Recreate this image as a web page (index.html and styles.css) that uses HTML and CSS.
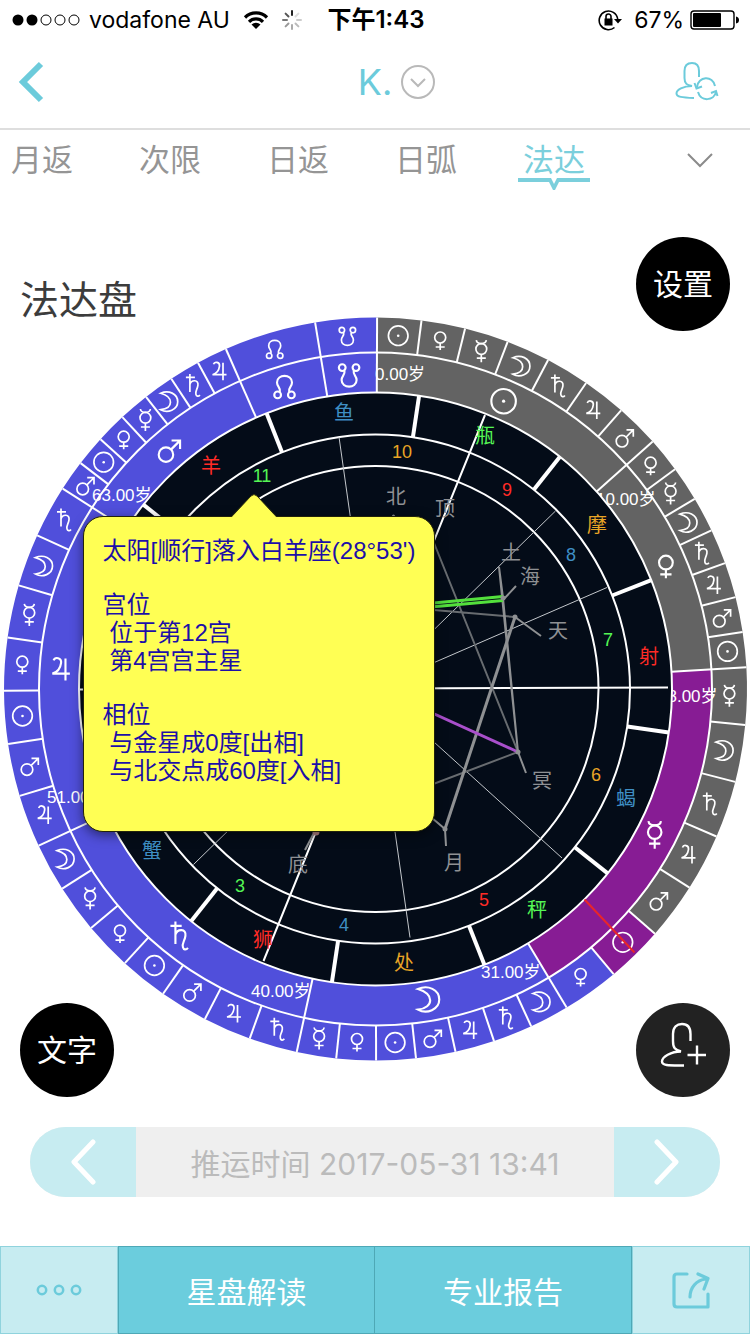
FILE: index.html
```html
<!DOCTYPE html>
<html lang="zh-CN">
<head>
<meta charset="utf-8">
<meta name="viewport" content="width=device-width, initial-scale=1">
<title>法达盘</title>
<link rel="stylesheet" href="styles.css">
</head>
<body>
<div class="app">
  <div class="status">
    <div class="status-side">
      <svg class="signal" viewBox="0 0 68 12" width="68" height="12" aria-hidden="true">
        <circle cx="6" cy="6" r="5.5" fill="#000"/><circle cx="20" cy="6" r="5.5" fill="#000"/>
        <g fill="none" stroke="#000"><circle cx="34" cy="6" r="5"/><circle cx="48" cy="6" r="5"/><circle cx="62" cy="6" r="5"/></g>
      </svg>
      <span>vodafone AU</span>
      <svg class="wifi" viewBox="0 0 26 20" width="26" height="20" aria-hidden="true">
        <g fill="none" stroke="#000" stroke-width="3.2"><path d="M2 7.500A15.500 15.500 0 0 1 24 7.500"/><path d="M6 11.800A9.800 9.800 0 0 1 20 11.800"/></g>
        <path d="M8.500 14.500a6.400 6.400 0 0 1 9 0L13 19z"/>
      </svg>
      <svg viewBox="-10 -10 20 20" width="20" height="20" stroke-width="2" stroke-linecap="round" aria-hidden="true">
        <path d="M0-5V-9" stroke="#222"/><path d="M3.500-3.500 6.400-6.400" stroke="#ddd"/><path d="M5 0H9" stroke="#ccc"/><path d="M3.500 3.500 6.400 6.400" stroke="#bbb"/>
        <path d="M0 5V9" stroke="#aaa"/><path d="M-3.500 3.500-6.400 6.400" stroke="#999"/><path d="M-5 0H-9" stroke="#777"/><path d="M-3.500-3.500-6.400-6.400" stroke="#555"/>
      </svg>
    </div>
    <span class="clock">下午1:43</span>
    <div class="status-side status-end">
      <svg viewBox="0 0 24 22" width="24" height="22" aria-hidden="true">
        <path d="M16.500 18.500A9.300 9.300 0 1 1 19.700 10" fill="none" stroke="#000" stroke-width="1.600"/>
        <path d="M16 10h8l-4 4.500z"/><rect x="6.500" y="9.500" width="8" height="7"/>
        <path d="M8 10V7.500a2.500 2.500 0 0 1 5 0V10" fill="none" stroke="#000" stroke-width="1.600"/>
      </svg>
      <span class="percent">67%</span>
      <svg viewBox="0 0 50 20" width="50" height="20" aria-hidden="true">
        <rect x="1" y="1" width="43" height="18" rx="3" fill="none" stroke="#000" stroke-width="1.400"/>
        <rect x="3" y="3" width="28" height="14" rx="1"/><path d="M46 6.500q3 .5 3 3.500t-3 3.500z"/>
      </svg>
    </div>
  </div>

  <header class="nav">
    <button class="icon-btn" aria-label="返回">
      <svg viewBox="0 0 28 44" width="28" height="44"><path d="M25 4 7 22 25 40" fill="none" stroke="#6ccbdb" stroke-width="6"/></svg>
    </button>
    <button class="nav-title">
      <span>K.</span>
      <svg viewBox="0 0 36 36" width="36" height="36" fill="none" stroke="#b9b9b9" stroke-width="2"><circle cx="18" cy="18" r="16"/><path d="M11 15l7 7 7-7"/></svg>
    </button>
    <button class="icon-btn nav-user" aria-label="切换用户">
      <svg viewBox="0 0 46 42" width="46" height="42" fill="none" stroke="#6ccbdb" stroke-width="2">
        <path d="M25 16V10C25 4 22 2 18 2S10.500 4 10.500 10V17C10.500 23 13 24 18 25C9 25 2.500 29 2.500 32.500S8 36.500 20 37"/>
        <path d="M23 26C24 15 39 14 41 25M42 31C40 40 27 41 24 31"/><path d="M20.500 22 22.500 27.500 28 25.500M37 32 42 30 43.500 35"/>
      </svg>
    </button>
  </header>

  <nav class="tabs">
    <a class="tab" href="#">月返</a>
    <a class="tab" href="#">次限</a>
    <a class="tab" href="#">日返</a>
    <a class="tab" href="#">日弧</a>
    <a class="tab tab-on" href="#" aria-current="page">法达<svg class="tab-mark" viewBox="0 0 72 12" width="72" height="12" aria-hidden="true"><path d="M0 0h72v4H41l-4 8h-2l-4-8H0z" fill="#7bcfdc"/><path d="M33 0h6l-3 6z" fill="#fff"/></svg></a>
    <button class="icon-btn tab-more" aria-label="更多">
      <svg viewBox="0 0 26 16" width="26" height="16" fill="none" stroke="#8b8b8b" stroke-width="2"><path d="M1 2 13 14 25 2"/></svg>
    </button>
  </nav>

  <main class="stage">
    <svg class="chart" viewBox="0 200 750 910" role="img" aria-label="法达盘">
      <defs>
        <g id="sun"><circle r="9.800"/><circle r="1.300" class="solid"/></g>
        <g id="venus"><circle cy="-3.500" r="5.500"/><path d="M0 2V9M-4.500 6H4.500"/></g>
        <g id="mercury"><path d="M-5-11C-4.500-6.500 4.500-6.500 5-11"/><circle cy="-2.200" r="5.400"/><path d="M0 3.200V11M-4.500 7H4.500"/></g>
        <g id="moon"><path d="M-8-8.500C0-12 9-8 9 0S-1 12-8 8C5 6.500 5-5-8-8.500z"/></g>
        <g id="saturn"><path d="M-3.500-11.500V6.500M-7.500-8H1.500M-3.500-1C-2-6 5.500-6 4.500 0C4 4 1.500 6 2.500 9C3 11 5 11.500 6.500 9.500"/></g>
        <g id="jupiter"><path d="M-6-7C-5-10 .5-9.500 0-5C-.5-1-3 2.500-7 3.500H7M3.500-8.500V9"/></g>
        <g id="mars"><circle cx="-3" cy="3.300" r="5.800"/><path d="M1.200-.9 8-7.700M1.500-8H8.300V-1.200"/></g>
        <g id="north"><path d="M-3.700 3.500C-3 0-6-.5-6-4C-6-11 6-11 6-4C6-.5 3 0 3.700 3.500"/><circle cx="-5.500" cy="6" r="2.700"/><circle cx="5.500" cy="6" r="2.700"/></g>
        <g id="south"><path d="M3.700-3.500C3 0 6 .5 6 4C6 11-6 11-6 4C-6 .5-3 0-3.700-3.500"/><circle cx="5.500" cy="-6" r="2.700"/><circle cx="-5.500" cy="-6" r="2.700"/></g>
      </defs>

      <g id="sectors"></g>
      <g class="age">
        <text x="375" y="380">0.00岁</text>
        <text x="596" y="505">10.00岁</text>
        <text x="658" y="702">18.00岁</text>
        <text x="481" y="978">31.00岁</text>
        <text x="251" y="997">40.00岁</text>
        <text x="47" y="803">51.00岁</text>
        <text x="92" y="501">63.00岁</text>
      </g>
      <circle class="disc" cx="375.500" cy="689" r="296.500"/>
      <g id="spokes" class="line"></g>
      <g class="line">
        <circle cx="375.500" cy="689" r="336.500"/>
        <circle cx="375.500" cy="689" r="254.500"/>
        <circle cx="375.500" cy="689" r="223"/>
      </g>
      <g id="glyphs" class="glyph"></g>
      <path class="now" d="M584.500 899.500 634.500 952.500"/>

      <g class="line">
        <path d="M79 689.500 668 687.500M485 415 263.500 961"/>
        <path class="thin" d="M339 437 410 937.500M555.500 511 193.500 864.500M607 587.500 143 789M562 858 189 520"/>
      </g>

      <g class="sign">
        <text class="red" x="211" y="473">羊</text>
        <text class="blue" x="344" y="420">鱼</text>
        <text class="green" x="485" y="443">瓶</text>
        <text class="gold" x="597" y="532">摩</text>
        <text class="red" x="649" y="664">射</text>
        <text class="blue" x="626" y="806">蝎</text>
        <text class="green" x="537" y="917">秤</text>
        <text class="gold" x="404" y="970">处</text>
        <text class="red" x="263" y="947">狮</text>
        <text class="blue" x="152" y="858">蟹</text>
      </g>
      <g class="house">
        <text class="green" x="262" y="482">11</text>
        <text class="gold" x="402" y="458">10</text>
        <text class="red" x="507" y="496">9</text>
        <text class="blue" x="571" y="561">8</text>
        <text class="green" x="608" y="646">7</text>
        <text class="gold" x="596" y="781">6</text>
        <text class="red" x="484" y="906">5</text>
        <text class="blue" x="344" y="931">4</text>
        <text class="green" x="240" y="892">3</text>
      </g>

      <g class="aspect">
        <path class="dim" d="M430 533 518 752 375 806M375 605 515 617"/>
        <path d="M499 567 503 598M503 598 518 752M503 600 516 586M515 617 541 636M518 752 526 773M445 829 446 846M445 829 375 770M499 567 518 752"/>
        <path class="bold" d="M515 617 445 829"/>
        <path class="bold trine" d="M375 608.500 503 596.500M375 612 503 600.500"/>
        <path class="bold violet" d="M375 687 518 752"/>
        <path d="M315 831 305 850"/>
        <g class="node"><circle cx="503" cy="598" r="2.500"/><circle cx="515" cy="617" r="2.500"/><circle cx="518" cy="752" r="2.500"/><circle cx="445" cy="829" r="2.500"/><circle cx="393.500" cy="516" r="1.500"/><circle cx="316" cy="832" r="3.500" fill="#b98a8a"/></g>
      </g>
      <g class="sign planet">
        <text x="396" y="504">北</text>
        <text x="445" y="516">顶</text>
        <text x="511" y="560">土</text>
        <text x="530" y="584">海</text>
        <text x="558" y="638">天</text>
        <text x="542" y="788">冥</text>
        <text x="454" y="870">月</text>
        <text x="298" y="872">底</text>
      </g>
    </svg>

    <div class="overlay">
      <h1 class="heading">法达盘</h1>
      <button class="round">设置</button>
      <button class="round">文字</button>
      <button class="round round-soft" aria-label="添加用户">
        <svg viewBox="0 -5 48 56" width="48" height="56" fill="none" stroke="#fff" stroke-width="2.400">
          <path d="M31.500 14V7C31.500 0 28-3 23-3S14 0 14 7V14C14 21 16 23 22 24.500C12 24.500 3 30 3 34.500S11 38.500 25 38.500"/><path d="M28.500 28H47M38 18.500V37.500"/>
        </svg>
      </button>
    </div>

    <section class="tip" role="tooltip">
      <svg class="tip-arrow" viewBox="0 0 48 26" width="48" height="26" aria-hidden="true"><path d="M0 26 21 3Q24 0 27 3L48 26z" fill="#ffff54"/><path d="M1 24 21 3Q24 0 27 3L47 24" fill="none" stroke="#33330d"/></svg>
      <p>太阳[顺行]落入白羊座(28°53')</p>
      <p>宫位<br>&nbsp;位于第12宫<br>&nbsp;第4宫宫主星</p>
      <p>相位<br>&nbsp;与金星成0度[出相]<br>&nbsp;与北交点成60度[入相]</p>
    </section>
  </main>

  <div class="stepper">
    <button class="step" aria-label="上一个"><svg viewBox="0 0 28 46" width="28" height="46"><path d="M24 3 5 23 24 43"/></svg></button>
    <button class="when">推运时间 2017-05-31 13:41</button>
    <button class="step" aria-label="下一个"><svg viewBox="0 0 28 46" width="28" height="46"><path d="M4 3 23 23 4 43"/></svg></button>
  </div>

  <footer class="bar">
    <button class="bar-side" aria-label="更多操作">
      <svg viewBox="0 0 46 12" width="46" height="12" fill="none" stroke="#6ccbdb" stroke-width="2.500"><circle cx="6" cy="6" r="4.200"/><circle cx="23" cy="6" r="4.200"/><circle cx="40" cy="6" r="4.200"/></svg>
    </button>
    <button class="bar-main">星盘解读</button>
    <button class="bar-main">专业报告</button>
    <button class="bar-side" aria-label="分享">
      <svg viewBox="0 0 38 38" width="38" height="38" fill="none" stroke="#6ccbdb" stroke-width="3.200" stroke-linecap="round" stroke-linejoin="round"><path d="M15 3H5Q2 3 2 6V33Q2 36 5 36H36V23"/><path d="M18 26C18 17 24 9 34 8M26 3 36 7.500 32 18"/></svg>
    </button>
  </footer>
</div>
<script src="chart.js"></script>
</body>
</html>
```

FILE: styles.css
```css
* { box-sizing: border-box; margin: 0; padding: 0; }

body {
  background: #fff;
  color: #000;
  font-family: Inter, "Noto Sans CJK SC", sans-serif;
}

button {
  border: 0;
  background: none;
  color: inherit;
  font: inherit;
  cursor: pointer;
}

svg { display: block; }

.app {
  display: flex;
  flex-direction: column;
  min-height: 100vh;
}

/* status bar */
.status {
  display: grid;
  grid-template-columns: 1fr auto 1fr;
  align-items: center;
  height: 40px;
  padding: 0 10px 0 12px;
  font-size: 23px;
  line-height: 40px;
}
.status-side { display: flex; align-items: center; gap: 9px; }
.status-end { justify-content: flex-end; gap: 6px; }
.percent { margin-left: 6px; }
.wifi { margin: 0 4px; }
.clock { font-size: 24px; font-weight: 600; }

/* title bar */
.nav {
  display: grid;
  grid-template-columns: 1fr auto 1fr;
  align-items: center;
  height: 90px;
  padding: 0 16px 4px;
  border-bottom: 2px solid #dedede;
}
.icon-btn { justify-self: start; }
.nav-user { justify-self: end; margin-right: 14px; }
.nav-title {
  display: flex;
  align-items: center;
  gap: 8px;
  padding-left: 44px;
  color: #6ccbdb;
  font-size: 36px;
  line-height: 44px;
}

/* tabs */
.tabs {
  display: flex;
  align-items: center;
  gap: 66px;
  height: 60px;
  padding: 0 37px 0 11px;
}
.tab {
  position: relative;
  color: #959595;
  font-size: 31px;
  line-height: 60px;
  text-decoration: none;
  white-space: nowrap;
}
.tab-on { color: #7bcfdc; }
.tab-mark {
  position: absolute;
  left: 50%;
  bottom: 0;
  transform: translateX(-50%);
}
.tab-more { margin-left: auto; }

/* chart */
.stage {
  display: grid;
  position: relative;
  margin-top: 10px;
}
.chart { grid-area: 1 / 1; width: 100%; height: auto; }

.gray { fill: #636363; }
.indigo { fill: #504fdb; }
.purple { fill: #871c94; }
.disc { fill: #040c18; stroke: #fff; stroke-width: 2; }
.line { fill: none; stroke: #fff; stroke-width: 2; }
.line .thin { stroke: #c4c8cc; stroke-width: 1; }
.line .thick { stroke-width: 4; }
.glyph { fill: none; stroke: #fff; stroke-width: 1.7; }
.solid { fill: #fff; stroke: none; }
.now { stroke: #e8262a; stroke-width: 2; }

.age { fill: #fff; font: 17px "Liberation Sans", "Noto Sans CJK SC", sans-serif; }
.sign { font: 20px "Noto Sans CJK SC", sans-serif; text-anchor: middle; }
.house { font: 18px "Liberation Sans", sans-serif; text-anchor: middle; }
.red { fill: #ff2b26; }
.blue { fill: #3f8fc4; }
.green { fill: #55f755; }
.gold { fill: #e9a526; }
.planet { fill: #8f9194; }

.aspect { fill: none; stroke: #8f9193; stroke-width: 2; }
.aspect .dim { stroke: #686c70; }
.aspect .bold { stroke-width: 3; }
.aspect .trine { stroke: #53e03c; }
.aspect .violet { stroke: #a94fcb; }
.node { fill: #8f9193; stroke: none; }

.overlay {
  grid-area: 1 / 1;
  display: grid;
  grid-template-columns: auto auto;
  justify-content: space-between;
  align-content: space-between;
  padding: 37px 20px 13px;
}
.heading {
  margin-top: 43px;
  color: #3c3c3c;
  font-size: 39px;
  font-weight: 400;
  line-height: 40px;
}
.round {
  display: grid;
  place-items: center;
  width: 94px;
  height: 94px;
  border-radius: 50%;
  background: #000;
  color: #fff;
  font-size: 30px;
  line-height: 40px;
}
.round-soft { background: #222; }

.tip {
  position: absolute;
  left: 11%;
  top: 316px;
  padding: 20px 19px 46px;
  border: 1px solid #22220a;
  border-radius: 20px;
  background: #ffff54;
  box-shadow: 0 3px 12px rgba(0, 0, 0, 0.5);
  color: #1c0fa8;
  font: 24px/28px "Liberation Sans", "Noto Sans CJK SC", sans-serif;
  white-space: nowrap;
}
.tip p + p { margin-top: 26px; }
.tip-arrow {
  position: absolute;
  left: 146px;
  bottom: 100%;
  margin-bottom: -2px;
}

/* time stepper */
.stepper {
  display: flex;
  height: 70px;
  margin: 17px 30px 0;
  overflow: hidden;
  border-radius: 35px;
  background: #efefef;
}
.step {
  display: grid;
  place-items: center;
  width: 106px;
  background: #c7ecf1;
}
.step path {
  fill: none;
  stroke: #fff;
  stroke-width: 5;
  stroke-linecap: round;
  stroke-linejoin: round;
}
.when {
  flex: 1;
  color: #bbb;
  font-size: 30px;
}

/* bottom bar */
.bar {
  display: grid;
  grid-template-columns: 118px 1fr 1fr 118px;
  height: 88px;
  margin-top: auto;
}
.bar button {
  display: grid;
  place-items: center;
  border: 1px solid #8fd3dd;
}
.bar .bar-side { background: #c7ecf1; }
.bar .bar-main {
  border-color: #4ea8b6;
  background: #6bcddd;
  color: #fff;
  font-size: 30px;
}
.bar .bar-main + .bar-main { border-left: 0; }
```

FILE: chart.js
```js
const CX = 375.5, CY = 689;
const R = { outer: 371.5, mid: 336.5, inner: 296.5, house: 254.5 };
const order = ["sun", "venus", "mercury", "moon", "saturn", "jupiter", "mars"];
const periods = [
  ["sun", 10], ["venus", 8], ["mercury", 13], ["moon", 9], ["saturn", 11],
  ["jupiter", 12], ["mars", 7], ["north", 3], ["south", 2]
];
const DEG_PER_YEAR = 360 / 75;
const CHART_START = 0.25;
const SIGN_START = 8.45;

const at = (deg, r) => {
  const a = deg * Math.PI / 180;
  return [(CX + r * Math.sin(a)).toFixed(1), (CY - r * Math.cos(a)).toFixed(1)];
};
const wedge = (a, b, r1, r2, cls) =>
  `<path class="${cls}" d="M${at(a, r2)}A${r2} ${r2} 0 0 1 ${at(b, r2)}L${at(b, r1)}A${r1} ${r1} 0 0 0 ${at(a, r1)}z"/>`;
const spoke = (a, r1, r2, cls = "") => `<path class="${cls}" d="M${at(a, r1)}L${at(a, r2)}"/>`;
const glyph = (id, a, r, scale) => `<use href="#${id}" transform="translate(${at(a, r)}) scale(${scale})"/>`;

let sectors = "", spokes = "", glyphs = "", start = CHART_START, index = 0;
periods.forEach(([ruler, years], p) => {
  const end = start + years * DEG_PER_YEAR;
  sectors += wedge(start, end, R.inner, R.mid, p < 2 ? "gray" : p === 2 ? "purple" : "indigo");
  glyphs += glyph(ruler, (start + end) / 2 - CHART_START, 315, 1.25);
  spokes += spoke(start, R.inner, R.outer);
  const first = order.indexOf(ruler);
  const count = first < 0 ? 1 : 7;
  const step = (end - start) / count;
  for (let i = 0; i < count; i++, index++) {
    const a = start + i * step;
    sectors += wedge(a, a + step, R.mid, R.outer, index < 19 ? "gray" : index === 19 ? "purple" : "indigo");
    glyphs += glyph(first < 0 ? ruler : order[(first + i) % 7], a + step / 2, 354, 1);
    if (i) spokes += spoke(a, R.mid, R.outer);
  }
  start = end;
});
for (let i = 0; i < 12; i++) spokes += spoke(SIGN_START + i * 30, R.house, R.inner, "thick");

document.getElementById("sectors").innerHTML = sectors;
document.getElementById("spokes").innerHTML = spokes;
document.getElementById("glyphs").innerHTML = glyphs;
```
